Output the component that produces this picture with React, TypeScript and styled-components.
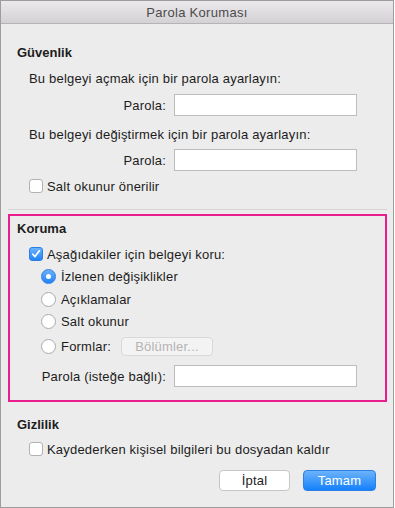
import styled, { createGlobalStyle } from 'styled-components';

const GlobalStyle = createGlobalStyle`
    html, body {
        margin: 0;
        padding: 0;
        background: #ffffff;
    }
    body {
        font-family: 'Liberation Sans', Arial, sans-serif;
        font-size: 13px;
        color: #1c1c1c;
    }
`;

const Window = styled.div`
    width: 392px;
    height: 506px;
    border: 1px solid #9d9d9d;
    background: #ececec;
    display: flex;
    flex-direction: column;
`;

const TitleBar = styled.div`
    height: 22px;
    flex-shrink: 0;
    border-bottom: 1px solid #b5b3b5;
    background: linear-gradient(#ebe9eb, #d3d1d3);
    display: flex;
    align-items: center;
    justify-content: center;
    color: #4c4c4c;
    font-size: 13px;
    letter-spacing: 0.3px;
`;

const Body = styled.div`
    display: flex;
    flex-direction: column;
    padding: 21px 0 0 7px;
`;

const Section = styled.div<{ $highlight?: boolean }>`
    width: 379px;
    box-sizing: border-box;
    display: flex;
    flex-direction: column;
    padding: ${(p) => (p.$highlight ? '5px 0 13px 7px' : '0 0 0 9px')};
    border: ${(p) => (p.$highlight ? '2px solid #ea1d8c' : 'none')};
    margin-top: ${(p) => (p.$highlight ? '4px' : '0')};
`;

const Header = styled.div<{ $gap?: number }>`
    height: 16px;
    line-height: 16px;
    font-weight: bold;
    font-size: 13px;
    margin-top: ${(p) => p.$gap ?? 0}px;
`;

const Row = styled.div<{ $indent?: number; $gap?: number; $h?: number }>`
    display: flex;
    align-items: center;
    height: ${(p) => p.$h ?? 16}px;
    margin-left: ${(p) => p.$indent ?? 12}px;
    margin-top: ${(p) => p.$gap ?? 0}px;
    white-space: nowrap;
    letter-spacing: 0.2px;
`;

const FieldLabel = styled.span<{ $width: number }>`
    width: ${(p) => p.$width}px;
    text-align: right;
    margin-right: 8px;
    flex-shrink: 0;
`;

const TextInput = styled.div`
    width: 183px;
    height: 22px;
    box-sizing: border-box;
    background: #ffffff;
    border: 1px solid #bdbdbd;
`;

const Box = styled.span<{ $checked?: boolean }>`
    width: 14px;
    height: 14px;
    box-sizing: border-box;
    border-radius: 3px;
    margin-right: 4px;
    flex-shrink: 0;
    display: flex;
    align-items: center;
    justify-content: center;
    border: 1px solid ${(p) => (p.$checked ? '#2b7fe6' : '#b2b2b2')};
    background: ${(p) => (p.$checked ? 'linear-gradient(#6bb2fc, #2383f6)' : '#ffffff')};
`;

const Radio = styled.span<{ $checked?: boolean }>`
    width: 15px;
    height: 15px;
    box-sizing: border-box;
    border-radius: 50%;
    margin-right: 5px;
    flex-shrink: 0;
    display: flex;
    align-items: center;
    justify-content: center;
    border: 1px solid ${(p) => (p.$checked ? '#2b7fe6' : '#aaaaaa')};
    background: ${(p) => (p.$checked ? 'linear-gradient(#6bb2fc, #2383f6)' : '#ffffff')};

    &::after {
        content: '';
        display: ${(p) => (p.$checked ? 'block' : 'none')};
        width: 5px;
        height: 5px;
        border-radius: 50%;
        background: #ffffff;
    }
`;

const Separator = styled.div`
    width: 379px;
    height: 1px;
    background: #d4d4d4;
    margin-top: 15px;
`;

const SmallButton = styled.div`
    width: 92px;
    height: 19px;
    box-sizing: border-box;
    margin-left: 10px;
    border: 1px solid #d9d9d9;
    border-radius: 4px;
    background: #f3f3f3;
    color: #b4b4b4;
    display: flex;
    align-items: center;
    justify-content: center;
`;

const ButtonBar = styled.div`
    display: flex;
    justify-content: flex-end;
    gap: 13px;
    width: 368px;
    margin-top: 13px;
    letter-spacing: 0.2px;
`;

const Button = styled.div<{ $primary?: boolean; $width: number }>`
    width: ${(p) => p.$width}px;
    height: 21px;
    box-sizing: border-box;
    border-radius: 4px;
    display: flex;
    align-items: center;
    justify-content: center;
    border: 1px solid ${(p) => (p.$primary ? '#2a7fe8' : '#c6c6c6')};
    background: ${(p) => (p.$primary ? 'linear-gradient(#6cb3fa, #1580fb)' : '#ffffff')};
    color: ${(p) => (p.$primary ? '#ffffff' : '#1c1c1c')};
`;

const Check = () => (
    <svg width="10" height="10" viewBox="0 0 10 10">
        <path d="M1.8 5.2 L4 7.6 L8.4 1.8" fill="none" stroke="#ffffff" strokeWidth="1.7" strokeLinecap="round" strokeLinejoin="round" />
    </svg>
);

const App = () => {
    return (
        <>
            <GlobalStyle />
            <Window>
                <TitleBar>Parola Koruması</TitleBar>
                <Body>
                    <Section>
                        <Header>Güvenlik</Header>
                        <Row $gap={9}>Bu belgeyi açmak için bir parola ayarlayın:</Row>
                        <Row $indent={0} $gap={8} $h={22}>
                            <FieldLabel $width={149}>Parola:</FieldLabel>
                            <TextInput />
                        </Row>
                        <Row $gap={10}>Bu belgeyi değiştirmek için bir parola ayarlayın:</Row>
                        <Row $indent={0} $gap={7} $h={22}>
                            <FieldLabel $width={149}>Parola:</FieldLabel>
                            <TextInput />
                        </Row>
                        <Row $gap={7}>
                            <Box />
                            Salt okunur önerilir
                        </Row>
                    </Section>
                    <Separator />
                    <Section $highlight>
                        <Header>Koruma</Header>
                        <Row $gap={9}>
                            <Box $checked>
                                <Check />
                            </Box>
                            Aşağıdakiler için belgeyi koru:
                        </Row>
                        <Row $indent={24} $gap={6}>
                            <Radio $checked />
                            İzlenen değişiklikler
                        </Row>
                        <Row $indent={24} $gap={7}>
                            <Radio />
                            Açıklamalar
                        </Row>
                        <Row $indent={24} $gap={6}>
                            <Radio />
                            Salt okunur
                        </Row>
                        <Row $indent={24} $gap={7} $h={20}>
                            <Radio />
                            Formlar:
                            <SmallButton>Bölümler...</SmallButton>
                        </Row>
                        <Row $indent={0} $gap={9} $h={22}>
                            <FieldLabel $width={149}>Parola (isteğe bağlı):</FieldLabel>
                            <TextInput />
                        </Row>
                    </Section>
                    <Section>
                        <Header $gap={15}>Gizlilik</Header>
                        <Row $gap={8}>
                            <Box />
                            Kaydederken kişisel bilgileri bu dosyadan kaldır
                        </Row>
                    </Section>
                    <ButtonBar>
                        <Button $width={71}>İptal</Button>
                        <Button $primary $width={73}>
                            Tamam
                        </Button>
                    </ButtonBar>
                </Body>
            </Window>
        </>
    );
};

export default App;
